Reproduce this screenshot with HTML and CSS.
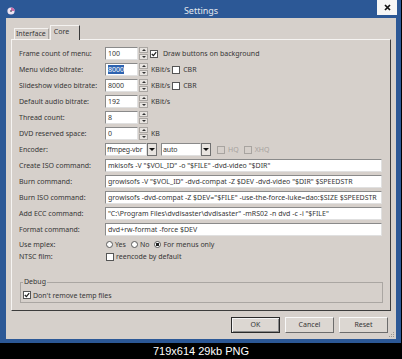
FILE: index.html
```html
<!DOCTYPE html>
<html lang="en">
<head>
    <meta charset="UTF-8">
    <title>Settings</title>
    <link rel="stylesheet" href="styles.css">
</head>
<body>
    <div class="screen">
        <div class="window">
            <div class="titlebar">
                <svg class="app-icon" viewBox="0 0 8 8" width="8" height="8">
                    <circle cx="4" cy="4" r="3.6" fill="#efe4f2"/>
                    <path d="M4 0.4 A3.6 3.6 0 0 1 7.6 4 L4 4 Z" fill="#c86aa8"/>
                    <circle cx="4" cy="4" r="1" fill="#6a6a7a"/>
                </svg>
                <span class="title">Settings</span>
                <div class="close">
                    <svg viewBox="0 0 7 7" width="7" height="7"><path d="M1 1 L6 6 M6 1 L1 6" stroke="#111" stroke-width="1.7"/></svg>
                </div>
            </div>

            <div class="client">
                <div class="tabs">
                    <div class="tab">Interface</div>
                    <div class="tab active">Core</div>
                </div>

                <div class="pane">
                    <div class="row">
                        <span class="label">Frame count of menu:</span>
                        <div class="spin"><div class="field">100</div><div class="spinner"><span class="up"></span><span class="down"></span></div></div>
                        <span class="check checked draw-check"><svg viewBox="0 0 6 6"><path d="M0.8 3 L2.4 4.6 L5.2 1.2" stroke="#222" stroke-width="1.3" fill="none"/></svg></span>
                        <span>Draw buttons on background</span>
                    </div>
                    <div class="row">
                        <span class="label">Menu video bitrate:</span>
                        <div class="spin"><div class="field"><span class="selected">8000</span></div><div class="spinner"><span class="up"></span><span class="down"></span></div></div>
                        <span class="unit">KBit/s</span>
                        <span class="check cbr-check"></span>
                        <span>CBR</span>
                    </div>
                    <div class="row">
                        <span class="label">Slideshow video bitrate:</span>
                        <div class="spin"><div class="field">8000</div><div class="spinner"><span class="up"></span><span class="down"></span></div></div>
                        <span class="unit">KBit/s</span>
                        <span class="check cbr-check"></span>
                        <span>CBR</span>
                    </div>
                    <div class="row">
                        <span class="label">Default audio bitrate:</span>
                        <div class="spin"><div class="field">192</div><div class="spinner"><span class="up"></span><span class="down"></span></div></div>
                        <span class="unit">KBit/s</span>
                    </div>
                    <div class="row">
                        <span class="label">Thread count:</span>
                        <div class="spin"><div class="field">8</div><div class="spinner"><span class="up"></span><span class="down"></span></div></div>
                    </div>
                    <div class="row">
                        <span class="label">DVD reserved space:</span>
                        <div class="spin"><div class="field">0</div><div class="spinner"><span class="up"></span><span class="down"></span></div></div>
                        <span class="unit">KB</span>
                    </div>
                    <div class="row">
                        <span class="label">Encoder:</span>
                        <div class="combo"><div class="field">ffmpeg-vbr</div><div class="arrow"></div></div>
                        <div class="combo combo-second"><div class="field">auto</div><div class="arrow"></div></div>
                        <span class="check disabled hq-check"></span>
                        <span class="muted">HQ</span>
                        <span class="check disabled xhq-check"></span>
                        <span class="muted">XHQ</span>
                    </div>
                    <div class="row">
                        <span class="label">Create ISO command:</span>
                        <div class="field long">mkisofs -V "$VOL_ID" -o "$FILE" -dvd-video "$DIR"</div>
                    </div>
                    <div class="row">
                        <span class="label">Burn command:</span>
                        <div class="field long">growisofs -V "$VOL_ID" -dvd-compat -Z $DEV -dvd-video "$DIR" $SPEEDSTR</div>
                    </div>
                    <div class="row">
                        <span class="label">Burn ISO command:</span>
                        <div class="field long">growisofs -dvd-compat -Z $DEV="$FILE" -use-the-force-luke=dao:$SIZE $SPEEDSTR</div>
                    </div>
                    <div class="row">
                        <span class="label">Add ECC command:</span>
                        <div class="field long">"C:\Program Files\dvdisaster\dvdisaster" -mRS02 -n dvd -c -i "$FILE"</div>
                    </div>
                    <div class="row">
                        <span class="label">Format command:</span>
                        <div class="field long">dvd+rw-format -force $DEV</div>
                    </div>
                    <div class="row small-row">
                        <span class="label">Use mplex:</span>
                        <span class="radio first"></span><span>Yes</span>
                        <span class="radio"></span><span>No</span>
                        <span class="radio on"></span><span>For menus only</span>
                    </div>
                    <div class="row ntsc-row">
                        <span class="label">NTSC film:</span>
                        <span class="check ntsc-check"></span>
                        <span>reencode by default</span>
                    </div>

                    <div class="group">
                        <span class="group-title">Debug</span>
                        <div class="row group-row">
                            <span class="check checked"><svg viewBox="0 0 6 6"><path d="M0.8 3 L2.4 4.6 L5.2 1.2" stroke="#222" stroke-width="1.3" fill="none"/></svg></span>
                            <span>Don't remove temp files</span>
                        </div>
                    </div>
                </div>

                <div class="buttons">
                    <div class="btn default">OK</div>
                    <div class="btn">Cancel</div>
                    <div class="btn">Reset</div>
                </div>

                <svg class="grip" viewBox="0 0 6 6" width="6" height="6">
                    <rect x="4" y="0" width="1" height="1" fill="#9a9692"/>
                    <rect x="2" y="2" width="1" height="1" fill="#9a9692"/>
                    <rect x="4" y="2" width="1" height="1" fill="#9a9692"/>
                    <rect x="0" y="4" width="1" height="1" fill="#9a9692"/>
                    <rect x="2" y="4" width="1" height="1" fill="#9a9692"/>
                    <rect x="4" y="4" width="1" height="1" fill="#9a9692"/>
                </svg>
            </div>
        </div>
        <div class="caption">719x614 29kb PNG</div>
    </div>
</body>
</html>
```

FILE: styles.css
```css
* {
    box-sizing: border-box;
}
body {
    margin: 0;
    background: #000;
    font-family: "Noto Sans", "DejaVu Sans", sans-serif;
    font-size: 7px;
    color: #363636;
}
.screen {
    width: 402px;
    height: 359px;
    background: #000;
}
.window {
    width: 401px;
    height: 343px;
    background: #2c5896;
    padding: 0 5px 4px 6px;
    display: flex;
    flex-direction: column;
}
.titlebar {
    height: 18px;
    flex: none;
    display: grid;
    grid-template-columns: 1fr auto 1fr;
    align-items: start;
}
.app-icon {
    margin: 7px 0 0 1px;
}
.title {
    font-size: 9px;
    line-height: 18px;
    padding-top: 2px;
    color: #e2e7ef;
}
.close {
    justify-self: end;
    width: 20px;
    height: 15px;
    margin-right: -1px;
    background: #f6f6f6;
    display: flex;
    align-items: center;
    justify-content: center;
}
.client {
    flex: 1;
    position: relative;
    background: #d6d0cb;
    padding: 7px 5px 0 5px;
}
.tabs {
    height: 14px;
    display: flex;
    align-items: flex-end;
    padding-left: 3px;
}
.tab {
    height: 11px;
    line-height: 10px;
    padding: 0 2px 0 1px;
    white-space: nowrap;
    border: 1px solid #f4f2f0;
    border-bottom: none;
    border-right-color: #a8a4a0;
}
.tab.active {
    width: 30px;
    height: 15px;
    line-height: 12px;
    margin-left: 1px;
    margin-bottom: -1px;
    padding-left: 3px;
    position: relative;
    background: #d6d0cb;
    border-right-color: #3a3a3a;
}
.pane {
    height: 272px;
    border: 1px solid;
    border-color: #f6f4f2 #3c3c3c #3c3c3c #f6f4f2;
    padding: 7px 0 0 7px;
}
.row {
    display: flex;
    align-items: center;
    height: 13px;
    margin-bottom: 3px;
    white-space: nowrap;
}
.small-row {
    height: 12px;
    margin-top: -1px;
    margin-bottom: 0;
}
.ntsc-row {
    margin-bottom: 0;
}
.label {
    width: 86px;
    flex: none;
}
.field {
    background: #fff;
    height: 13px;
    line-height: 11px;
    padding: 0 2px;
    border: 1px solid;
    border-color: #8a8a8a #e0e0e0 #e0e0e0 #8a8a8a;
    overflow: hidden;
}
.field.long {
    width: 277px;
}
.selected {
    background: #2f63b0;
    color: #fff;
}
.spin {
    display: flex;
    gap: 1px;
}
.spin .field {
    width: 33px;
}
.spinner {
    width: 9px;
    height: 13px;
    display: flex;
    flex-direction: column;
    gap: 1px;
}
.spinner span {
    flex: 1;
    background: #e8e4e0;
    border: 1px solid #aaa6a2;
    display: flex;
    align-items: center;
    justify-content: center;
}
.spinner .up::before {
    content: "";
    border-left: 2px solid transparent;
    border-right: 2px solid transparent;
    border-bottom: 2px solid #333;
}
.spinner .down::before {
    content: "";
    border-left: 2px solid transparent;
    border-right: 2px solid transparent;
    border-top: 2px solid #333;
}
.unit {
    margin-left: 3px;
}
.check {
    width: 8px;
    height: 8px;
    flex: none;
    background: #fff;
    border: 1px solid #555;
    margin-right: 3px;
    display: flex;
}
.check svg {
    width: 6px;
    height: 6px;
}
.check.disabled {
    border-color: #a8a4a0;
    background: #d6d0cb;
}
.draw-check {
    margin-left: 2px;
    margin-right: 5px;
}
.cbr-check {
    margin-left: 2px;
}
.ntsc-check {
    margin-left: 1px;
    margin-right: 2px;
}
.hq-check {
    margin-left: 6px;
}
.xhq-check {
    margin-left: 5px;
}
.muted {
    color: #a6a29e;
}
.combo {
    display: flex;
    width: 52px;
}
.combo .field {
    flex: 1;
    padding: 0 0 0 1px;
    letter-spacing: -0.15px;
}
.combo-second {
    width: 50px;
    margin-left: 4px;
}
.arrow {
    width: 10px;
    height: 13px;
    flex: none;
    background: #e8e4e0;
    border: 1px solid #707070;
    display: flex;
    align-items: center;
    justify-content: center;
}
.arrow::before {
    content: "";
    border-left: 3px solid transparent;
    border-right: 3px solid transparent;
    border-top: 3px solid #111;
}
.radio {
    width: 7px;
    height: 7px;
    flex: none;
    border-radius: 50%;
    border: 1px solid #5a5a5a;
    background: #fff;
    margin: 0 2px 0 5px;
}
.radio.first {
    margin-left: 1px;
}
.radio.on {
    background: radial-gradient(circle, #222 0 1.6px, #fff 2px);
}
.group {
    width: 363px;
    height: 21px;
    margin: 19px 0 0 1px;
    border: 1px solid #aaa6a2;
    padding-left: 2px;
}
.group-title {
    display: block;
    width: fit-content;
    height: 10px;
    line-height: 10px;
    margin-top: -6px;
    padding: 0 1px;
    background: #d6d0cb;
}
.group-row {
    height: 12px;
    margin: 2px 0 0;
}
.group-row .check {
    margin-right: 2px;
}
.buttons {
    display: flex;
    justify-content: flex-end;
    gap: 5px;
    margin-top: 6px;
    padding-right: 3px;
}
.btn {
    width: 49px;
    height: 16px;
    line-height: 14px;
    text-align: center;
    background: #dcd7d2;
    border: 1px solid;
    border-color: #f8f8f8 #6c6c6c #6c6c6c #f8f8f8;
}
.btn.default {
    border-color: #2a2a2a;
    box-shadow: inset 1px 1px #f4f4f4, inset -1px -1px #8a8a8a;
}
.grip {
    position: absolute;
    right: 1px;
    bottom: 1px;
}
.caption {
    height: 16px;
    line-height: 16px;
    text-align: center;
    color: #fff;
    font-family: "Liberation Sans", Arial, sans-serif;
    font-size: 11px;
}
```
